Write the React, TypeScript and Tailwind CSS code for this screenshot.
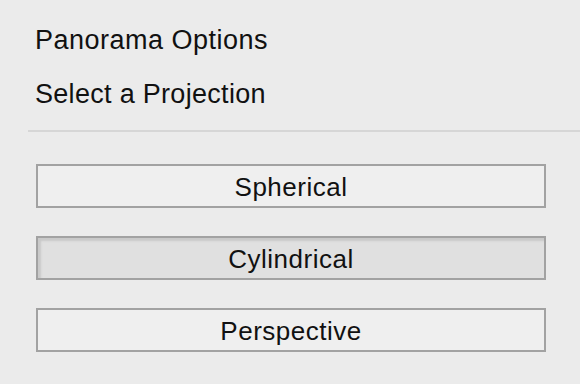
import React, { useState } from 'react';

const options = ['Spherical', 'Cylindrical', 'Perspective'];

const App: React.FC = () => {
  const [selected, setSelected] = useState('Cylindrical');

  return (
    <div
      className="w-[580px] h-[384px] bg-[#ebebeb] text-[#111] overflow-hidden"
      style={{ fontFamily: '"Liberation Sans", Arial, sans-serif' }}
    >
      <div className="pl-[35px] pt-[25px]">
        <h1 className="text-[27px] leading-[30px] tracking-[0.5px]">Panorama Options</h1>
        <h2 className="text-[27px] leading-[30px] tracking-[0.3px] mt-[24px]">Select a Projection</h2>
      </div>
      <div className="ml-[28px] mt-[21px] h-[2px] bg-[#d6d6d6]" />
      <div className="flex flex-col gap-[28px] pl-[36px] pt-[32px]">
        {options.map((opt) => {
          const active = opt === selected;
          return (
            <button
              key={opt}
              type="button"
              onClick={() => setSelected(opt)}
              className={
                'h-[44px] w-[510px] border-2 border-[#a2a2a2] text-[26px] tracking-[0.5px] text-[#111] pt-[2px] ' +
                (active
                  ? 'bg-[#e0e0e0] shadow-[inset_3px_3px_2px_#c9c9c9]'
                  : 'bg-[#efefef]')
              }
            >
              {opt}
            </button>
          );
        })}
      </div>
    </div>
  );
};

export default App;
